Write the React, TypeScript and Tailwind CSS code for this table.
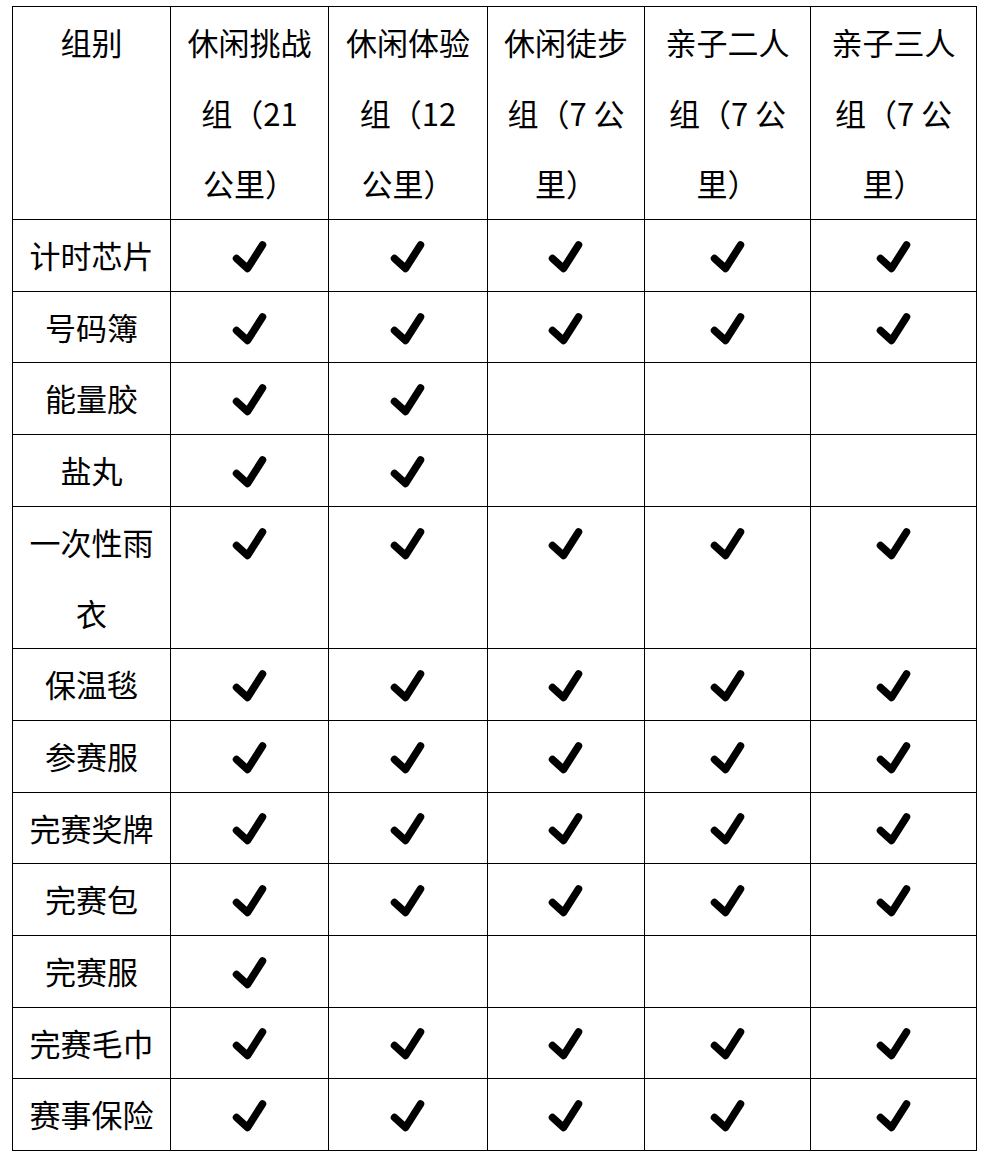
const headers: string[][] = [
  ['组别'],
  ['休闲挑战', '组（21', '公里）'],
  ['休闲体验', '组（12', '公里）'],
  ['休闲徒步', '组（7 公', '里）'],
  ['亲子二人', '组（7 公', '里）'],
  ['亲子三人', '组（7 公', '里）'],
];

const rows: { name: string[]; marks: boolean[] }[] = [
  { name: ['计时芯片'], marks: [true, true, true, true, true] },
  { name: ['号码簿'], marks: [true, true, true, true, true] },
  { name: ['能量胶'], marks: [true, true, false, false, false] },
  { name: ['盐丸'], marks: [true, true, false, false, false] },
  { name: ['一次性雨', '衣'], marks: [true, true, true, true, true] },
  { name: ['保温毯'], marks: [true, true, true, true, true] },
  { name: ['参赛服'], marks: [true, true, true, true, true] },
  { name: ['完赛奖牌'], marks: [true, true, true, true, true] },
  { name: ['完赛包'], marks: [true, true, true, true, true] },
  { name: ['完赛服'], marks: [true, false, false, false, false] },
  { name: ['完赛毛巾'], marks: [true, true, true, true, true] },
  { name: ['赛事保险'], marks: [true, true, true, true, true] },
];

const widths = ['w-[158px]', 'w-[158px]', 'w-[159px]', 'w-[157px]', 'w-[166px]', 'w-[166px]'];

function Check() {
  return (
    <div className="flex h-[70.7px] items-center justify-center">
      <svg width="40" height="40" viewBox="0 0 40 40" className="mt-[1px]">
        <path
          d="M6.5 22.5 L17.5 32.5 L32.5 9"
          fill="none"
          stroke="#000"
          strokeWidth="7.5"
          strokeLinecap="round"
          strokeLinejoin="round"
        />
      </svg>
    </div>
  );
}

export default function App() {
  return (
    <div className="min-h-screen bg-white pl-[12px] pt-[6px] text-black">
      <table
        className="table-fixed border-collapse text-[31px] leading-[70.7px]"
        style={{ fontFamily: '"Noto Sans CJK SC", "Noto Sans", sans-serif' }}
      >
        <colgroup>
          {widths.map((w, i) => (
            <col key={i} className={w} />
          ))}
        </colgroup>
        <thead>
          <tr>
            {headers.map((h, i) => (
              <th key={i} className="border border-black p-0 text-center align-top font-normal">
                {h.map((line, j) => (
                  <div key={j} className="h-[70.7px]">{line}</div>
                ))}
              </th>
            ))}
          </tr>
        </thead>
        <tbody>
          {rows.map((r) => (
            <tr key={r.name.join('')}>
              <td className="border border-black p-0 text-center align-top">
                {r.name.map((line, j) => (
                  <div key={j} className="h-[70.7px]">{line}</div>
                ))}
              </td>
              {r.marks.map((m, i) => (
                <td key={i} className="border border-black p-0 text-center align-top">
                  {m ? <Check /> : <div className="h-[70.7px]" />}
                </td>
              ))}
            </tr>
          ))}
        </tbody>
      </table>
    </div>
  );
}
